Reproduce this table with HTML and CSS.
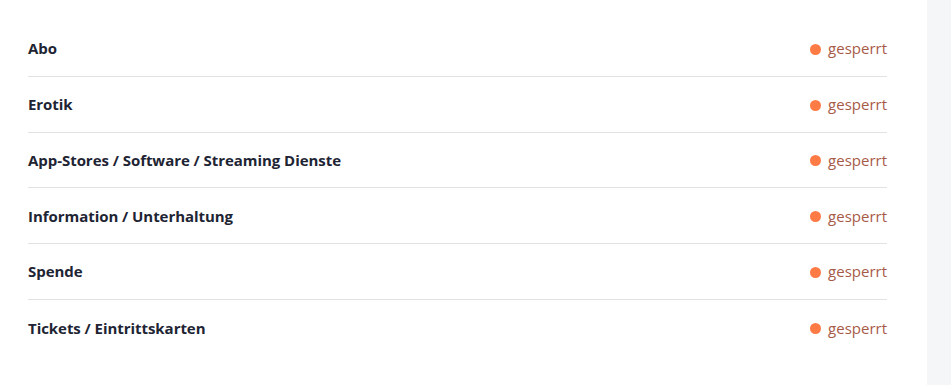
FILE: index.html
```html
<!DOCTYPE html>
<html lang="de">
<head>
<meta charset="utf-8">
<title>Kategorien</title>
<link rel="stylesheet" href="styles.css">
</head>
<body>
<div class="layout">
  <main class="content">
    <ul class="category-list">
      <li class="category-row"><span class="category-name">Abo</span><span class="status"><span class="status-dot"></span>gesperrt</span></li>
      <li class="category-row"><span class="category-name">Erotik</span><span class="status"><span class="status-dot"></span>gesperrt</span></li>
      <li class="category-row"><span class="category-name">App-Stores / Software / Streaming Dienste</span><span class="status"><span class="status-dot"></span>gesperrt</span></li>
      <li class="category-row"><span class="category-name">Information / Unterhaltung</span><span class="status"><span class="status-dot"></span>gesperrt</span></li>
      <li class="category-row"><span class="category-name">Spende</span><span class="status"><span class="status-dot"></span>gesperrt</span></li>
      <li class="category-row"><span class="category-name">Tickets / Eintrittskarten</span><span class="status"><span class="status-dot"></span>gesperrt</span></li>
    </ul>
  </main>
  <aside class="side-panel"></aside>
</div>
</body>
</html>
```

FILE: styles.css
```css
* { box-sizing: border-box; }

html, body {
  margin: 0;
  height: 100%;
  background: #ffffff;
}

body {
  font-family: "Open Sans", "Noto Sans", sans-serif;
  color: #1e2433;
}

.layout {
  display: flex;
  height: 100%;
}

.content {
  flex: 1;
  padding: 21px 40px 0 28px;
}

.side-panel {
  width: 24px;
  background: #f5f6f8;
}

.category-list {
  list-style: none;
  margin: 0;
  padding: 0;
}

.category-row {
  display: flex;
  align-items: center;
  justify-content: space-between;
  height: 55.75px;
  border-bottom: 1px solid #e2e2e2;
}

.category-row:last-child {
  border-bottom: none;
}

.category-name {
  font-size: 15px;
  font-weight: 700;
  letter-spacing: -0.05px;
}

.status {
  display: flex;
  align-items: center;
  gap: 7px;
  font-size: 15px;
  color: #a75a48;
}

.status-dot {
  width: 11px;
  height: 11px;
  margin-top: 2px;
  border-radius: 50%;
  background: #ff7b45;
}
```
